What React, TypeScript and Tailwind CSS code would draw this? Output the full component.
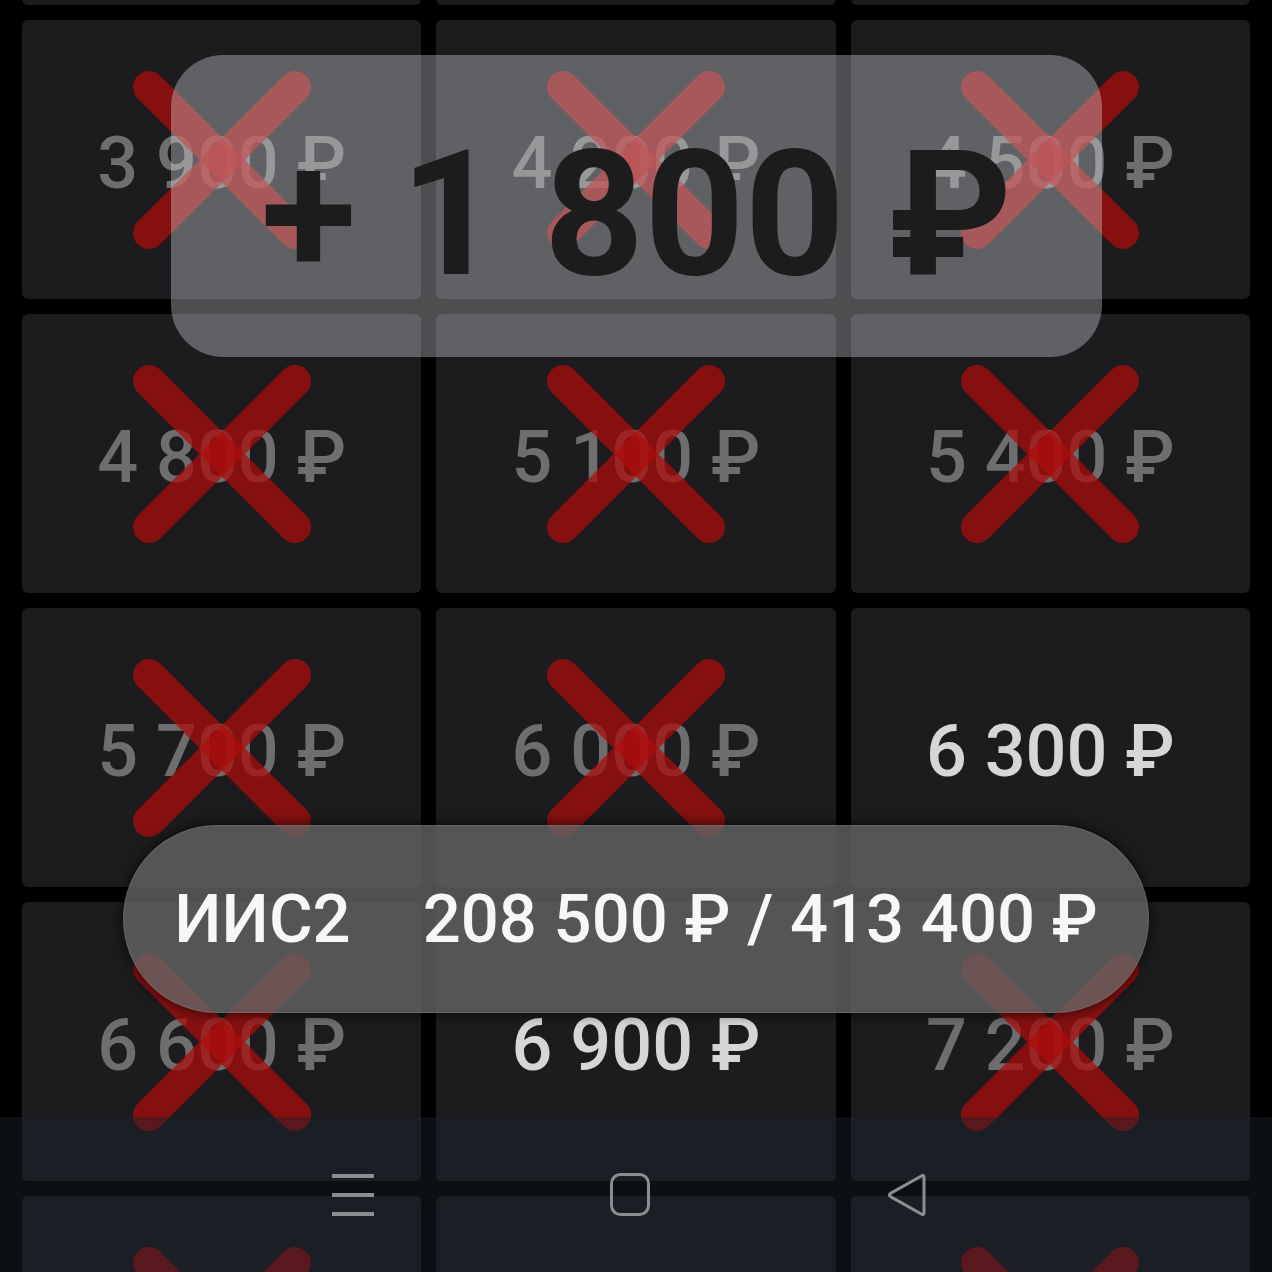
import React from 'react';

const rows: { price: string; taken: boolean }[][] = [
  [
    { price: '3 000 ₽', taken: true },
    { price: '3 300 ₽', taken: true },
    { price: '3 600 ₽', taken: true },
  ],
  [
    { price: '3 900 ₽', taken: true },
    { price: '4 200 ₽', taken: true },
    { price: '4 500 ₽', taken: true },
  ],
  [
    { price: '4 800 ₽', taken: true },
    { price: '5 100 ₽', taken: true },
    { price: '5 400 ₽', taken: true },
  ],
  [
    { price: '5 700 ₽', taken: true },
    { price: '6 000 ₽', taken: true },
    { price: '6 300 ₽', taken: false },
  ],
  [
    { price: '6 600 ₽', taken: true },
    { price: '6 900 ₽', taken: false },
    { price: '7 200 ₽', taken: true },
  ],
  [
    { price: '7 500 ₽', taken: true },
    { price: '7 800 ₽', taken: false },
    { price: '8 100 ₽', taken: true },
  ],
];

const Cross = () => (
  <svg
    width="178"
    height="178"
    viewBox="0 0 178 178"
    className="absolute left-1/2 top-1/2 -translate-x-1/2 -translate-y-1/2"
  >
    <g stroke="rgba(172,12,12,0.74)" strokeWidth="32" strokeLinecap="round">
      <line x1="16" y1="16" x2="162" y2="162" />
      <line x1="162" y1="16" x2="16" y2="162" />
    </g>
  </svg>
);

const Cell: React.FC<{ price: string; taken: boolean }> = ({ price, taken }) => (
  <div className="relative h-[279px] rounded-[6px] bg-[#1c1c1e] flex items-center justify-center">
    <span
      className={`pt-2 text-[72px] font-medium leading-none ${taken ? 'text-[#6e6e6e]' : 'text-[#d6d6d6]'}`}
    >
      {price}
    </span>
    {taken && <Cross />}
  </div>
);

export default function App() {
  return (
    <div
      className="relative h-[1272px] w-[1272px] overflow-hidden bg-black"
      style={{ fontFamily: 'Roboto, "Noto Sans", sans-serif' }}
    >
      <div className="mt-[-274px] grid grid-cols-3 gap-[15px] px-[22px]">
        {rows.flat().map((c) => (
          <Cell key={c.price} price={c.price} taken={c.taken} />
        ))}
      </div>

      {/* toast: added sum */}
      <div className="absolute left-[171px] top-[55px] flex h-[302px] w-[931px] items-center justify-center rounded-[52px] bg-[rgba(235,242,250,0.32)]">
        <span className="pt-4 text-[175px] font-bold leading-none text-[#1c1c1c]">+ 1 800 ₽</span>
      </div>

      {/* account total pill */}
      <div className="absolute left-[123px] top-[825px] flex h-[188px] w-[1026px] items-center justify-center gap-[72px] rounded-full border border-white/10 bg-[rgba(100,100,100,0.8)] shadow-[0_0_14px_rgba(0,0,0,0.7)]">
        <span className="text-[67px] font-medium leading-none text-[#f7f7f7]">ИИС2</span>
        <span className="text-[67px] font-medium leading-none text-[#f7f7f7]">208 500 ₽ / 413 400 ₽</span>
      </div>

      {/* system navigation bar */}
      <div className="absolute bottom-0 left-0 flex h-[155px] w-full items-center bg-[rgba(28,34,46,0.43)] pl-[214px]">
        <div className="flex w-[277px] justify-center">
          <svg width="42" height="42" viewBox="0 0 42 42">
            <g fill="#8b8e92">
              <rect x="0" y="0" width="42" height="4" />
              <rect x="0" y="19" width="42" height="4" />
              <rect x="0" y="38" width="42" height="4" />
            </g>
          </svg>
        </div>
        <div className="flex w-[277px] justify-center">
          <svg width="40" height="43" viewBox="0 0 40 43">
            <rect x="1.5" y="1.5" width="37" height="40" rx="9" fill="none" stroke="#8b8e92" strokeWidth="3" />
          </svg>
        </div>
        <div className="flex w-[277px] justify-center">
          <svg width="42" height="44" viewBox="0 0 42 44">
            <path
              d="M38 4 L38 40 Q38 42.5 35.8 41.2 L4.5 23.6 Q2.2 22 4.5 20.4 L35.8 2.8 Q38 1.5 38 4 Z"
              fill="none"
              stroke="#8b8e92"
              strokeWidth="3"
              strokeLinejoin="round"
            />
          </svg>
        </div>
      </div>
    </div>
  );
}
